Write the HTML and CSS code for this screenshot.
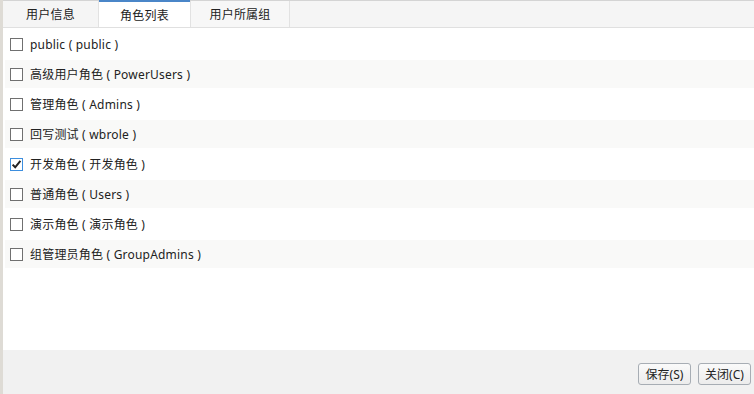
FILE: index.html
```html
<!DOCTYPE html>
<html lang="zh">
<head>
<meta charset="utf-8">
<link rel="stylesheet" href="styles.css">
</head>
<body>
<div class="app">
  <div class="strip"></div>
  <div class="main">
    <div class="tabs">
      <div class="tab tab-first">用户信息</div>
      <div class="tab tab-active">角色列表</div>
      <div class="tab tab-last">用户所属组</div>
    </div>
    <div class="list">
      <label class="row"><span class="cb"></span><span class="txt">public ( public )</span></label>
      <label class="row alt"><span class="cb"></span><span class="txt">高级用户角色 ( PowerUsers )</span></label>
      <label class="row"><span class="cb"></span><span class="txt">管理角色 ( Admins )</span></label>
      <label class="row alt"><span class="cb"></span><span class="txt">回写测试 ( wbrole )</span></label>
      <label class="row"><span class="cb checked"><svg viewBox="0 0 13 13" width="13" height="13"><path d="M2.6 6.6 L5.2 9.3 L10.4 2.8" fill="none" stroke="#222" stroke-width="2"/></svg></span><span class="txt">开发角色 ( 开发角色 )</span></label>
      <label class="row alt"><span class="cb"></span><span class="txt">普通角色 ( Users )</span></label>
      <label class="row"><span class="cb"></span><span class="txt">演示角色 ( 演示角色 )</span></label>
      <label class="row alt"><span class="cb"></span><span class="txt">组管理员角色 ( GroupAdmins )</span></label>
    </div>
    <div class="footer">
      <button class="btn">保存(S)</button>
      <button class="btn">关闭(C)</button>
    </div>
  </div>
</div>
</body>
</html>
```
FILE: styles.css
```css
html, body {
  margin: 0;
  padding: 0;
  background: #ffffff;
}
body {
  font-family: "Noto Sans", "Noto Sans CJK SC", sans-serif;
  font-size: 12px;
  color: #222;
}
.app {
  display: flex;
  width: 754px;
  height: 394px;
  overflow: hidden;
}
.strip {
  width: 3px;
  background: #dedbd5;
  flex: none;
}
.main {
  flex: 1;
  display: flex;
  flex-direction: column;
  min-width: 0;
}
.tabs {
  display: flex;
  height: 26px;
  border-top: 1px solid #d4d4d4;
  border-bottom: 1px solid #e0e0e0;
  background: #f5f5f5;
  flex: none;
}
.tab {
  display: flex;
  align-items: center;
  justify-content: center;
  height: 26px;
  box-sizing: border-box;
  color: #222;
  letter-spacing: 0.2px;
}
.tab-first {
  width: 96px;
  border-right: 1px solid #e2e2e2;
}
.tab-active {
  width: 91px;
  background: #fff;
  border-top: 2px solid #4a86c8;
  height: 27px;
  margin-bottom: -1px;
  margin-top: -1px;
}
.tab-last {
  width: 100px;
  border-right: 1px solid #e2e2e2;
  border-left: 1px solid #e2e2e2;
  background: #f7f7f7;
}
.list {
  flex: 1;
  display: flex;
  flex-direction: column;
  gap: 2px;
  padding-top: 2px;
}
.row {
  display: flex;
  align-items: center;
  height: 28px;
  margin-left: 2px;
  padding-left: 5px;
}
.row.alt {
  background: #f9f9f8;
}
.cb {
  width: 13px;
  height: 13px;
  box-sizing: border-box;
  border: 1px solid #707070;
  background: #fff;
  margin-right: 7px;
  flex: none;
  position: relative;
}
.cb.checked {
  border-color: #3d8ede;
}
.cb svg {
  position: absolute;
  left: -1px;
  top: -1px;
}
.txt {
  line-height: 16px;
  padding-top: 2px;
  letter-spacing: 0.2px;
}
.footer {
  height: 44px;
  background: #f1f1f1;
  display: flex;
  align-items: center;
  justify-content: flex-end;
  gap: 7px;
  padding-right: 3px;
  flex: none;
}
.btn {
  font-family: "Noto Sans", "Noto Sans CJK SC", sans-serif;
  font-size: 12px;
  color: #222;
  height: 22px;
  width: 53px;
  padding: 0;
  border: 1px solid #a7adb4;
  border-radius: 3px;
  background: linear-gradient(#fafafa, #ececec);
  margin-top: 4px;
}
```
